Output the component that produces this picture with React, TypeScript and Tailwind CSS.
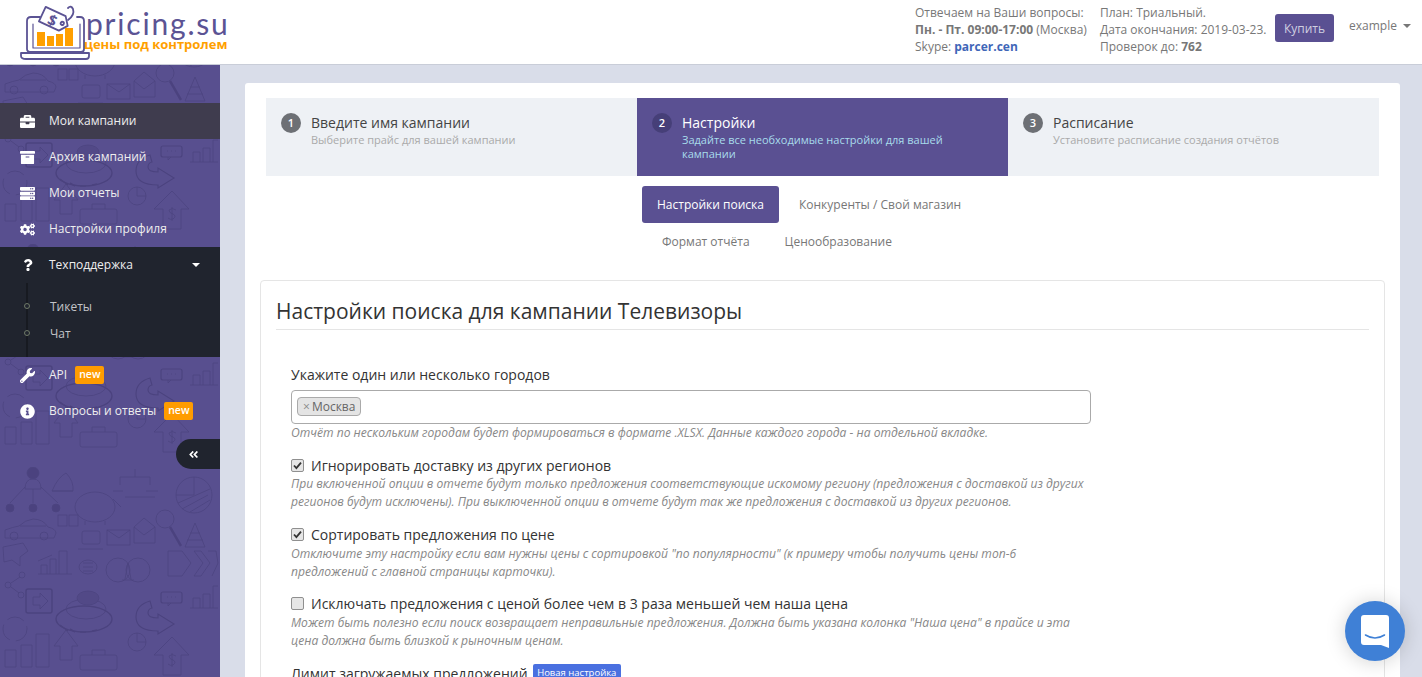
import { FaArchive, FaBriefcase, FaCogs, FaInfoCircle, FaQuestion, FaServer, FaWrench, FaAngleDoubleLeft } from "react-icons/fa";

function Doodles() {
  return (
    <svg className="absolute inset-0 h-full w-full" aria-hidden="true">
      <defs>
        <pattern id="doodle" width="220" height="223" patternUnits="userSpaceOnUse" patternTransform="translate(0,-44)">
          <g fill="none" stroke="#453d78" strokeWidth="0.8">
            {/* person network */}
            <circle cx="33" cy="6" r="6" fill="#453d78" />
            <path d="M25 22q0-10 8-10t8 10zM33 22v14M25 20L10 36M41 20l17 16" />
            <circle cx="10" cy="41" r="4" fill="#453d78" />
            <circle cx="33" cy="41" r="4" fill="#453d78" />
            <circle cx="56" cy="41" r="4" fill="#453d78" />
            {/* cone */}
            <path d="M52 24q6-14 14-18q8 8 7 18zM52 24h21" />
            {/* piggy */}
            <ellipse cx="95" cy="40" rx="20" ry="15" />
            <path d="M85 54v4M105 54v4M113 32l8 8" />
            {/* org chart */}
            <path d="M135 2v8M120 10h30M120 10v8M150 10v8M113 24h10M146 24h12M125 30h30" />
            {/* pie */}
            <circle cx="194" cy="28" r="18" />
            <path d="M194 28V10M194 28H176M178 36l32-14M182 42l26-14M190 45l20-12" />
            {/* car */}
            <path d="M5 70v-7q8-3 14-4q6-6 14-7q10 0 15 8q8 2 8 6l-2 5H5z" />
            <circle cx="14" cy="69" r="4" />
            <circle cx="44" cy="69" r="4" />
            <path d="M20 59h26" />
            {/* boxes */}
            <rect x="58" y="48" width="9" height="11" />
            <rect x="69" y="48" width="9" height="11" />
            {/* laptop */}
            <rect x="82" y="64" width="18" height="13" rx="2" />
            <path d="M78 82h25" />
            {/* envelopes */}
            <rect x="107" y="63" width="23" height="15" />
            <path d="M107 63l12 8l11-8M134 76V60l10-9l11 9v16zM134 60l10 8l11-8" />
            {/* magnifier */}
            <circle cx="165" cy="52" r="9" />
            <path d="M170 60l11 19" strokeWidth="2.500" />
            {/* pyramid */}
            <path d="M195 56l10 24h-20zM190 66h10M187 73h16" />
            {/* map */}
            <path d="M3 80l20-4l5 8l-8 6v9l-8-6l-8 2z" />
            {/* bars */}
            <path d="M38 107h34M41 107V98h6v9M50 107V92h6v15M59 107V84h8v23M38 94l14-6" />
            {/* speech */}
            <ellipse cx="88" cy="100" rx="9" ry="7" />
            <path d="M83 96h10M83 100h10M83 104h10" />
            {/* venn */}
            <circle cx="118" cy="103" r="12" />
            <circle cx="138" cy="103" r="12" />
            <path d="M128 96l-3 16M128 96l3 16M122 113h12" />
            {/* arrows */}
            <path d="M168 84h14l9 12l-9 13h-14zM194 84h7l9 12l-9 13h-7l9-13zM208 84h8l2 12l-6 13" />
            {/* network */}
            <circle cx="8" cy="118" r="3" />
            <circle cx="22" cy="108" r="3" />
            <circle cx="21" cy="128" r="3" />
            <path d="M11 116l9-6M11 120l8 6" />
            {/* video */}
            <rect x="26" y="122" width="26" height="24" rx="2" strokeWidth="1.500" />
            <path d="M33 130h7v-4l8 8l-8 8v-4h-7z" />
            {/* hat */}
            <ellipse cx="84" cy="152" rx="28" ry="13" strokeWidth="1.500" />
            <ellipse cx="86" cy="142" rx="20" ry="10" />
            <ellipse cx="88" cy="131" rx="11" ry="7" fill="#4f4683" />
            <path d="M60 158l8 6M70 162l5 3M80 165h6M92 164l5-1" strokeWidth="1.500" />
            {/* speech dots */}
            <rect x="161" y="125" width="21" height="11" rx="2" strokeWidth="1.200" />
            <path d="M168 136v3l3-3M167 130h1M171 130h1M175 130h1" />
            {/* bars right */}
            <path d="M190 141h28M193 141v-10h7v10M203 141v-14h7v14M213 141v-22h5" />
            {/* curved arrow */}
            <path d="M150 134q-14 4-14 16q0 14 22 14v3l16-10l-16-10v4q-10 0-10-5q0-4 4-5z" strokeWidth="1.200" />
            {/* circular arrows */}
            <circle cx="15" cy="162" r="12" strokeDasharray="18 6" />
            {/* bars 3d */}
            <path d="M5 183h11v17H5zM21 178h11v22H21zM36 167h13v33H36z" />
            {/* arrow up */}
            <path d="M66 163l12 16h-6v14H60v-14h-6z" />
            {/* briefcase */}
            <rect x="80" y="188" width="37" height="15" rx="2" />
            <path d="M92 188v-5h13v5" />
            {/* small pie */}
            <circle cx="137" cy="175" r="9" />
            <path d="M137 175v-9M137 175h9" />
            {/* dollar arrow */}
            <path d="M172 170l17 18h-8v20h-18v-20h-9z" />
            <path d="M172 186v14M176 189q-4-3-7 0q0 3 4 4q4 2 0 5q-3 1-5-1" />
          </g>
        </pattern>
      </defs>
      <rect width="100%" height="100%" fill="url(#doodle)" opacity="0.7" />
    </svg>
  );
}

function Logo() {
  return (
    <div className="flex items-start pl-[20px] pt-[3px]">
      <svg width="70" height="58" viewBox="0 0 70 58" className="shrink-0">
        <g fill="none" stroke="#5b5394" strokeWidth="1.8" strokeLinejoin="round" strokeLinecap="round">
          <path d="M20 14H11q-4 0-4 4v28q0 3 4 3h50q3 0 3-3V18q0-4-4-4h-3" />
          <path d="M1 50h68v3q0 3-3 3H6q-5 0-5-3z" />
          <path d="M13 21v24h47V21" strokeWidth="1.2" />
          <g transform="rotate(25 35 17)">
            <path d="M21 9h22l6 8l-6 8H21z" fill="#fff" />
            <circle cx="43" cy="17" r="1.6" />
          </g>
          <path d="M48 17q7-5 5-11q-2-4-5-1" />
        </g>
        <text x="28" y="23" fontSize="15" fontWeight="700" fill="#5b5394" transform="rotate(25 33 18)" className="font-['Open_Sans']">$</text>
        <g fill="#ff9f00">
          <rect x="17" y="29" width="8" height="14" />
          <rect x="27" y="33" width="7" height="10" />
          <rect x="36" y="31" width="7" height="12" />
          <rect x="45" y="25" width="8" height="18" />
        </g>
      </svg>
      <div className="-ml-[4px] flex flex-col pt-[5px]">
        <span className="h-[29px] font-['Lato'] text-[30px] font-normal leading-[30px] tracking-[1.8px] text-[#5b5394]">pricing.su</span>
        <span className="-ml-[2px] font-['Open_Sans'] text-[13px] font-bold leading-[15px] text-[#ff9f00]">цены под контролем</span>
      </div>
    </div>
  );
}

function Header() {
  return (
    <header className="flex h-[65px] shrink-0 items-start border-b border-[#c9cdd8] bg-white font-['Open_Sans'] text-[12px] leading-[17px] text-[#777]">
      <Logo />
      <div className="ml-auto flex items-start pt-[4px]">
        <div className="w-[185px]">
          <p>Отвечаем на Ваши вопросы:</p>
          <p><b>Пн. - Пт. 09:00-17:00</b> (Москва)</p>
          <p>Skype: <b className="text-[#3f66b8]">parcer.cen</b></p>
        </div>
        <div className="w-[175px]">
          <p>План: Триальный.</p>
          <p>Дата окончания: 2019-03-23.</p>
          <p>Проверок до: <b>762</b></p>
        </div>
        <button className="mt-[10px] h-[28px] w-[59px] rounded-[3px] bg-[#5a5092] text-center text-[12px] text-[#cfcfe0]">Купить</button>
        <div className="ml-[15px] mr-[12px] mt-[13px] flex w-[61px] items-center">
          <span>example</span>
          <span className="ml-[6px] h-0 w-0 border-x-[4px] border-t-[4px] border-x-transparent border-t-[#777]" />
        </div>
      </div>
    </header>
  );
}

function NewBadge() {
  return <span className="ml-[8px] flex h-[18px] items-center rounded-[2px] bg-[#ff9c00] px-[4px] text-[10.5px] font-semibold text-white">new</span>;
}

function NavItem({ icon, label, active, badge }: { icon: React.ReactNode; label: string; active?: boolean; badge?: boolean }) {
  return (
    <div className={`flex h-[36px] items-center ${active ? "bg-[#3f3c4e]" : ""}`}>
      <span className="flex w-[49px] justify-center pl-[20px] pr-[14px] text-[15px] text-white">{icon}</span>
      <span className="text-[#eee]">{label}</span>
      {badge && <NewBadge />}
    </div>
  );
}

function Sidebar() {
  return (
    <aside className="relative h-full w-[220px] shrink-0 overflow-hidden bg-[#584f8f] font-['Open_Sans'] text-[12px]">
      <Doodles />
      <nav className="relative pt-[38px]">
        <NavItem icon={<FaBriefcase />} label="Мои кампании" active />
        <NavItem icon={<FaArchive />} label="Архив кампаний" />
        <NavItem icon={<FaServer />} label="Мои отчеты" />
        <NavItem icon={<FaCogs />} label="Настройки профиля" />
        <div className="relative h-[110px] bg-[#20242e]">
          <div className="flex h-[36px] items-center">
            <span className="flex w-[49px] justify-center pl-[20px] pr-[14px] text-[12px] text-white"><FaQuestion /></span>
            <span className="text-[#eee]">Техподдержка</span>
            <span className="ml-auto mr-[20px] h-0 w-0 border-x-[4.5px] border-t-[4px] border-x-transparent border-t-white" />
          </div>
          <span className="absolute bottom-0 left-[26px] top-[36px] w-[2px] bg-[#171a21]" />
          <div className="flex h-[27px] items-center pl-[50px] pt-[20px] text-[#c3c4c8]">Тикеты</div>
          <div className="mt-[15px] flex h-[17px] items-center pl-[50px] text-[#c3c4c8]">Чат</div>
          <span className="absolute left-[24px] top-[56px] h-[6px] w-[6px] rounded-full border border-[#6f7a68] bg-[#20242e]" />
          <span className="absolute left-[24px] top-[83px] h-[6px] w-[6px] rounded-full border border-[#6f7a68] bg-[#20242e]" />
        </div>
        <NavItem icon={<FaWrench />} label="API" badge />
        <NavItem icon={<FaInfoCircle />} label="Вопросы и ответы" badge />
      </nav>
      <button className="absolute right-0 top-[374px] flex h-[30px] w-[44px] items-center rounded-l-full bg-[#20242e] pl-[12px] text-[11px] text-white">
        <FaAngleDoubleLeft />
      </button>
    </aside>
  );
}

const steps = [
  { n: 1, title: "Введите имя кампании", sub: "Выберите прайс для вашей кампании" },
  { n: 2, title: "Настройки", sub: "Задайте все необходимые настройки для вашей кампании", active: true },
  { n: 3, title: "Расписание", sub: "Установите расписание создания отчётов" },
];

function Steps() {
  return (
    <div className="mx-[21px] grid h-[78px] grid-cols-3">
      {steps.map((s) => (
        <div key={s.n} className={`flex pl-[15px] pr-[30px] pt-[15px] ${s.active ? "bg-[#5a5092]" : "bg-[#eef1f5]"}`}>
          <span className={`flex h-[20px] w-[20px] shrink-0 items-center justify-center rounded-full text-[11px] font-semibold text-white ${s.active ? "bg-[#463f78]" : "bg-[#6d7075]"}`}>{s.n}</span>
          <div className="ml-[10px]">
            <p className={`text-[14px] leading-[20px] ${s.active ? "text-white" : "text-[#444]"}`}>{s.title}</p>
            <p className={`text-[11px] leading-[14px] ${s.active ? "text-[#a8dcec]" : "text-[#aaa]"}`}>{s.sub}</p>
          </div>
        </div>
      ))}
    </div>
  );
}

function Tabs() {
  return (
    <div className="mt-[10px] flex flex-col text-[12px] text-[#777]">
      <div className="ml-[397px] flex h-[37px] items-center gap-[5px]">
        <span className="flex h-[37px] items-center rounded-[3px] bg-[#5a5092] px-[15px] text-white">Настройки поиска</span>
        <span className="px-[15px]">Конкуренты / Свой магазин</span>
      </div>
      <div className="ml-[402px] flex h-[37px] items-center gap-[5px]">
        <span className="px-[15px]">Формат отчёта</span>
        <span className="px-[15px]">Ценообразование</span>
      </div>
    </div>
  );
}

function CheckBox({ checked }: { checked?: boolean }) {
  return (
    <span className="flex h-[13px] w-[13px] shrink-0 items-center justify-center rounded-[2px] border border-[#8f8f8f] bg-[#e6e6e6]">
      {checked && (
        <svg width="9" height="9" viewBox="0 0 9 9">
          <path d="M1 4.5l2.4 2.6L8 1.6" fill="none" stroke="#333" strokeWidth="1.8" />
        </svg>
      )}
    </span>
  );
}

function Option({ checked, label, help, className, helpClass }: { checked?: boolean; label: string; help: string; className: string; helpClass?: string }) {
  return (
    <div className={className}>
      <div className="flex h-[20px] items-center gap-[7px] text-[14px] text-[#333]">
        <CheckBox checked={checked} />
        {label}
      </div>
      <p className={`text-[12.1px] italic leading-[18px] text-[#888] ${helpClass ?? ""}`}>{help}</p>
    </div>
  );
}

function SearchForm() {
  return (
    <section className="mx-[15px] mt-[20px] rounded-[4px] border border-[#e5e5e5] bg-white px-[15px] pb-[20px] pt-[14px]">
      <h2 className="border-b border-[#e5e5e5] pb-[2px] text-[21px] leading-[32px] text-[#333]">Настройки поиска для кампании Телевизоры</h2>
      <div className="ml-[15px] w-[800px]">
        <label className="mt-[35px] block h-[25px] text-[14px] leading-[20px] text-[#333]">Укажите один или несколько городов</label>
        <div className="flex h-[34px] items-start rounded-[4px] border border-[#aaa] pl-[5px] pt-[6px]">
          <span className="flex h-[19px] items-center rounded-[4px] border border-[#aaa] bg-[#e4e4e4] px-[5px] text-[12px] text-[#666]">
            <span className="mr-[2px] text-[#888]">×</span>Москва
          </span>
        </div>
        <p className="text-[12.1px] italic leading-[18px] text-[#888]">Отчёт по нескольким городам будет формироваться в формате .XLSX. Данные каждого города - на отдельной вкладке.</p>
        <Option
          className="mt-[13px]"
          checked
          label="Игнорировать доставку из других регионов"
          help="При включенной опции в отчете будут только предложения соответствующие искомому региону (предложения с доставкой из других регионов будут исключены). При выключенной опции в отчете будут так же предложения с доставкой из других регионов."
        />
        <Option
          className="mt-[13px]"
          helpClass="mt-[1px]"
          checked
          label="Сортировать предложения по цене"
          help='Отключите эту настройку если вам нужны цены с сортировкой "по популярности" (к примеру чтобы получить цены топ-6 предложений с главной страницы карточки).'
        />
        <Option
          className="mt-[12px]"
          helpClass="mt-[1px]"
          label="Исключать предложения с ценой более чем в 3 раза меньшей чем наша цена"
          help='Может быть полезно если поиск возвращает неправильные предложения. Должна быть указана колонка "Наша цена" в прайсе и эта цена должна быть близкой к рыночным ценам.'
        />
        <div className="mt-[13px] flex h-[20px] items-center text-[14px] text-[#333]">
          Лимит загружаемых предложений
          <span className="ml-[5px] flex h-[18px] items-center rounded-[2px] bg-[#4a70e0] px-[4.5px] text-[9.5px] text-white">Новая настройка</span>
        </div>
      </div>
    </section>
  );
}

function ChatButton() {
  return (
    <div className="absolute bottom-[16px] right-[17px] flex h-[60px] w-[60px] items-center justify-center rounded-full bg-[#3f80d6] shadow-[0_1px_20px_rgba(0,0,0,0.18)]">
      <svg width="28" height="33" viewBox="0 0 28 33">
        <path d="M3 0h22q3 0 3 3v30l-8-3H3q-3 0-3-3V3q0-3 3-3z" fill="#fff" />
        <path d="M4.500 20q9.500 6 19 0" fill="none" stroke="#3f80d6" strokeWidth="1.600" strokeLinecap="round" />
      </svg>
    </div>
  );
}

export default function App() {
  return (
    <div className="relative flex h-screen flex-col overflow-hidden bg-[#d9dde9]">
      <Header />
      <div className="flex min-h-0 flex-1">
        <Sidebar />
        <main className="min-w-0 flex-1 overflow-hidden pl-[25px] pr-[22px] pt-[18px] font-['Open_Sans']">
          <div className="rounded-t-[3px] bg-white pt-[15px]">
            <Steps />
            <Tabs />
            <SearchForm />
          </div>
        </main>
      </div>
      <ChatButton />
    </div>
  );
}
